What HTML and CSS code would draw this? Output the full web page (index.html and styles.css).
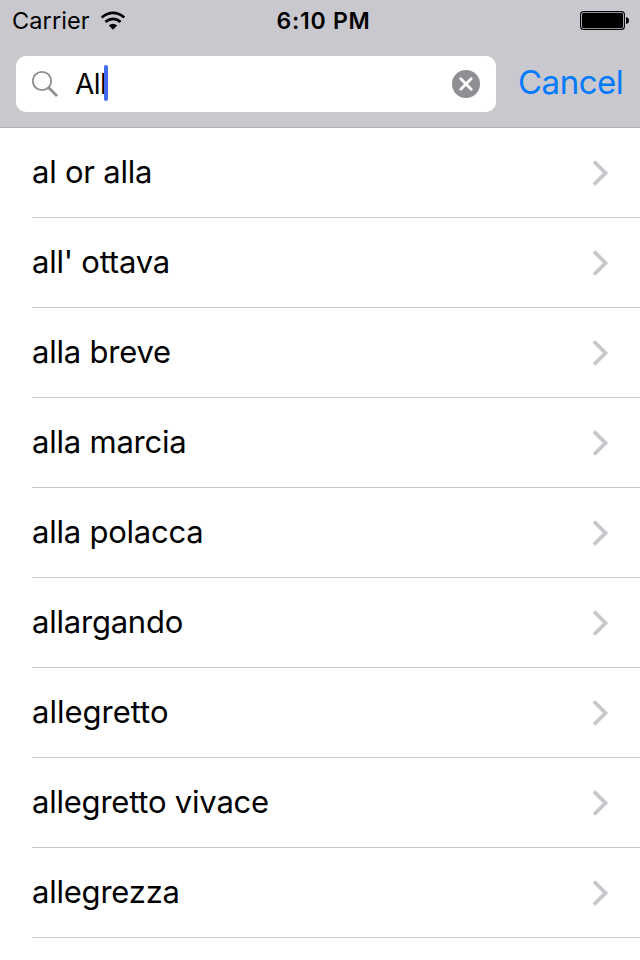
FILE: index.html
```html
<!DOCTYPE html>
<html lang="en">
<head>
<meta charset="utf-8">
<title>Music terms</title>
<link rel="stylesheet" href="styles.css">
</head>
<body>
<header class="top">
  <div class="status">
    <div class="status-left">
      <span class="carrier">Carrier</span>
      <svg class="wifi" width="26" height="20" viewBox="0 0 26 20"><g fill="none" stroke="#000" stroke-width="2.7"><path d="M1.7 6.5Q13 -2.6 24.3 6.5"/><path d="M5.4 10.9Q13 4.8 20.6 10.9"/></g><path d="M8.8 14.4Q13 11 17.2 14.4L13 18.8Z"/></svg>
    </div>
    <span class="time">6:10 PM</span>
    <div class="status-right">
      <svg width="50" height="20" viewBox="0 0 50 20"><rect x=".6" y=".6" width="43.8" height="17.8" rx="3" fill="none" stroke="#000" stroke-width="1.1"/><rect x="2" y="2" width="41" height="15" rx="1.5"/><path d="M46 6Q49 6.5 49 9.5T46 13Z"/></svg>
    </div>
  </div>
  <div class="search">
    <div class="field">
      <svg class="glass" width="28" height="28" viewBox="0 0 28 28" fill="none" stroke="#8e8e93"><circle cx="10" cy="11" r="9.2" stroke-width="1.8"/><path d="M16.5 17.5L25 26" stroke-width="2.8"/></svg>
      <span class="query">All</span><span class="caret"></span>
      <svg class="clear" width="28" height="28" viewBox="0 0 28 28"><circle cx="14" cy="14" r="14" fill="#8e8e93"/><path d="M8.8 8.8L19.2 19.2M19.2 8.8L8.8 19.2" stroke="#fff" stroke-width="2.8" stroke-linecap="round"/></svg>
    </div>
    <span class="cancel">Cancel</span>
  </div>
</header>
<svg class="defs" width="0" height="0"><symbol id="chevron" viewBox="0 0 18 28"><path d="M2 2.5L13.5 14L2 25.5" fill="none" stroke="#c7c7cc" stroke-width="3.8"/></symbol></svg>
<ul class="list">
  <li class="row"><span class="term">al or alla</span><svg class="chev"><use href="#chevron"/></svg></li>
  <li class="row"><span class="term">all' ottava</span><svg class="chev"><use href="#chevron"/></svg></li>
  <li class="row"><span class="term">alla breve</span><svg class="chev"><use href="#chevron"/></svg></li>
  <li class="row"><span class="term">alla marcia</span><svg class="chev"><use href="#chevron"/></svg></li>
  <li class="row"><span class="term">alla polacca</span><svg class="chev"><use href="#chevron"/></svg></li>
  <li class="row"><span class="term">allargando</span><svg class="chev"><use href="#chevron"/></svg></li>
  <li class="row"><span class="term wide">allegretto</span><svg class="chev"><use href="#chevron"/></svg></li>
  <li class="row"><span class="term">allegretto vivace</span><svg class="chev"><use href="#chevron"/></svg></li>
  <li class="row"><span class="term">allegrezza</span><svg class="chev"><use href="#chevron"/></svg></li>
</ul>
</body>
</html>
```
FILE: styles.css
```css
* { box-sizing: border-box; }
body {
  margin: 0;
  width: 640px;
  height: 960px;
  overflow: hidden;
  background: #fff;
  color: #000;
  font-family: Inter, "Liberation Sans", sans-serif;
}
svg { display: block; flex: none; }
.defs { display: none; }
.top {
  height: 128px;
  background: #c9c8ce;
  border-bottom: 1px solid #b2b1b6;
}
.status {
  display: grid;
  grid-template-columns: 1fr auto 1fr;
  align-items: center;
  height: 40px;
  padding: 1px 10px 0 12px;
}
.status-left { display: flex; align-items: center; gap: 10px; }
.carrier { font-size: 23.5px; line-height: 28px; letter-spacing: 0.1px; }
.time { font-size: 23px; line-height: 28px; font-weight: 600; letter-spacing: 0.75px; margin-left: 5px; }
.status-right { display: flex; justify-content: flex-end; }
.search { display: flex; align-items: center; padding: 16px 0 0 16px; }
.field {
  display: flex;
  align-items: center;
  width: 480px;
  height: 56px;
  padding: 0 16px;
  background: #fff;
  border-radius: 10px;
}
.query { margin-left: 15px; font-size: 28px; line-height: 40px; letter-spacing: -0.5px; }
.caret { width: 4px; height: 36px; margin-left: -2px; margin-top: -2px; border-radius: 2px; background: #426bf2; }
.clear { margin-left: auto; }
.cancel { margin: -5px 0 0 22px; font-size: 33px; line-height: 40px; letter-spacing: -0.5px; color: #007aff; }
.list { margin: 0; padding: 0 0 0 32px; list-style: none; }
.row {
  display: flex;
  align-items: center;
  justify-content: space-between;
  height: 90px;
  padding-right: 30px;
  border-bottom: 1px solid #c8c7cc;
  font-size: 31px;
}
.term { margin-top: -2px; letter-spacing: -0.22px; }
.wide { letter-spacing: 0; }
.chev { width: 18px; height: 28px; }
```
